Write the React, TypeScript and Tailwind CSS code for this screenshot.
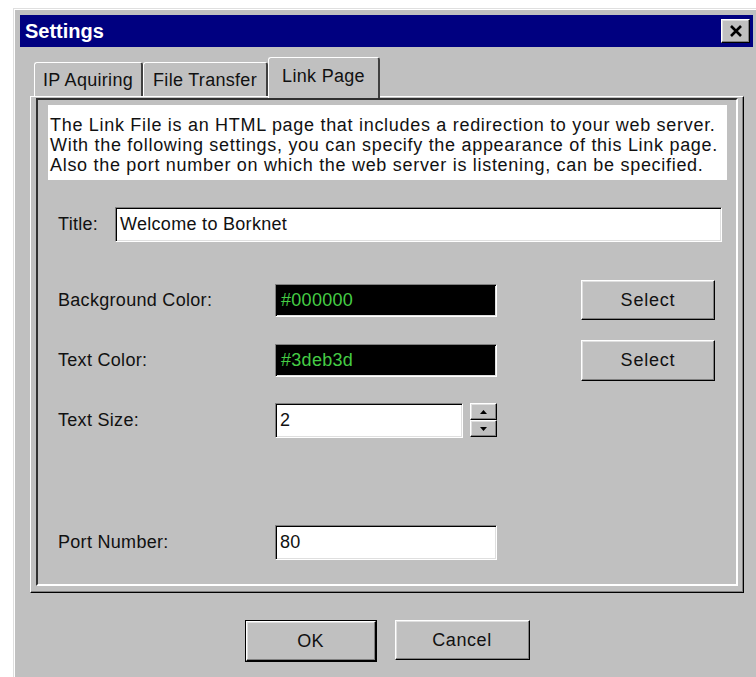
import React from "react";

// classic 3D bevels
const sunken =
  "border border-t-[#808080] border-l-[#808080] border-b-white border-r-white shadow-[inset_1px_1px_0_#000,inset_-1px_-1px_0_#dfdfdf]";
const raised =
  "border border-t-white border-l-white border-b-black border-r-black shadow-[inset_-1px_-1px_0_#808080,inset_1px_1px_0_#dfdfdf]";

function Button({ label, className = "" }: { label: string; className?: string }) {
  return (
    <div className={`bg-[#c0c0c0] ${raised} flex items-center justify-center ${className}`}>
      {label}
    </div>
  );
}

function Tab({ label, active, className = "" }: { label: string; active?: boolean; className?: string }) {
  return (
    <div
      className={`bg-[#c0c0c0] border-l border-t border-l-white border-t-white border-r-2 border-r-[#404040] rounded-t-[3px] flex items-center justify-center ${
        active ? "h-[41px] -mb-[2px] relative z-10 pb-[3px]" : "h-[34px] pt-[2px]"
      } ${className}`}
    >
      {label}
    </div>
  );
}

function ColorBox({ value }: { value: string }) {
  return (
    <div className={`w-[222px] h-[33px] bg-black ${sunken} flex items-center pl-[5px] text-[#45cc45]`}>
      {value}
    </div>
  );
}

export default function App() {
  return (
    <div className="w-[756px] h-[677px] bg-white overflow-hidden pl-[13px] pt-[8px] font-['Liberation_Sans',Arial,sans-serif] text-[18px] tracking-[0.3px] text-[#111]">
      <div className="w-[760px] h-[700px] bg-[#c0c0c0] border-l border-t border-[#dfdfdf] shadow-[inset_1px_1px_0_#fff] pl-[6px] pt-[6px]">
        {/* title bar */}
        <div className="w-[733px] h-[32px] bg-[#000080] flex items-center justify-between pl-[5px] pr-[3px]">
          <span className="text-white font-bold text-[20px] tracking-normal">Settings</span>
          <div className={`w-[29px] h-[24px] bg-[#c0c0c0] ${raised} flex items-center justify-center`}>
            <svg width="14" height="12" viewBox="0 0 14 12">
              <path d="M2 1 L12 11 M12 1 L2 11" stroke="#000" strokeWidth="2.6" />
            </svg>
          </div>
        </div>

        {/* tabs */}
        <div className="mt-[10px] ml-[14px] h-[39px] flex items-end">
          <Tab label="IP Aquiring" className="w-[109px]" />
          <Tab label="File Transfer" className="w-[125px]" />
          <Tab label="Link Page" active className="w-[112px]" />
        </div>

        {/* page */}
        <div className="ml-[10px] w-[714px] h-[497px] border-l border-t border-white border-r border-b border-r-black border-b-black shadow-[inset_-1px_-1px_0_#808080] pl-[5px] pt-[1px] pr-[5px] pb-[6px]">
          <div className="h-full border-2 border-t-[#303030] border-l-[#303030] border-b-white border-r-white flex flex-col">
            <div className="ml-[10px] mt-[5px] w-[679px] h-[75px] bg-white pt-[10px] pl-[2px] leading-[20px] tracking-[0.7px]">
              <div>The Link File is an HTML page that includes a redirection to your web server.</div>
              <div>With the following settings, you can specify the appearance of this Link page.</div>
              <div>Also the port number on which the web server is listening, can be specified.</div>
            </div>

            <div className="mt-[27px] h-[35px] flex items-center">
              <div className="w-[77px] pl-[20px]">Title:</div>
              <div className={`w-[607px] h-[35px] bg-white ${sunken} flex items-center pl-[4px]`}>
                Welcome to Borknet
              </div>
            </div>

            <div className="mt-[38px] h-[40px] flex items-center">
              <div className="w-[237px] pl-[20px]">Background Color:</div>
              <ColorBox value="#000000" />
              <Button label="Select" className="ml-[84px] w-[134px] h-[40px] tracking-[0.8px]" />
            </div>

            <div className="mt-[20px] h-[40px] flex items-center">
              <div className="w-[237px] pl-[20px]">Text Color:</div>
              <ColorBox value="#3deb3d" />
              <Button label="Select" className="ml-[84px] w-[134px] h-[41px] tracking-[0.8px]" />
            </div>

            <div className="mt-[20px] h-[40px] flex items-center">
              <div className="w-[237px] pl-[20px]">Text Size:</div>
              <div className={`w-[188px] h-[35px] bg-white ${sunken} flex items-center pl-[4px]`}>2</div>
              <div className="ml-[7px] flex flex-col">
                <div className={`w-[27px] h-[17px] bg-[#c0c0c0] ${raised} flex items-center justify-center`}>
                  <svg width="7" height="4" viewBox="0 0 7 4">
                    <path d="M3.5 0 L7 4 L0 4 Z" fill="#000" />
                  </svg>
                </div>
                <div className={`w-[27px] h-[17px] bg-[#c0c0c0] ${raised} flex items-center justify-center`}>
                  <svg width="7" height="4" viewBox="0 0 7 4">
                    <path d="M0 0 L7 0 L3.5 4 Z" fill="#000" />
                  </svg>
                </div>
              </div>
            </div>

            <div className="mt-[85px] h-[35px] flex items-center">
              <div className="w-[237px] pl-[20px]">Port Number:</div>
              <div className={`w-[222px] h-[35px] bg-white ${sunken} flex items-center pl-[4px]`}>80</div>
            </div>
          </div>
        </div>

        {/* dialog buttons */}
        <div className="ml-[10px] w-[714px] mt-[27px] flex justify-center items-start gap-[18px]">
          <div className="border border-black">
            <Button label="OK" className="w-[130px] h-[40px]" />
          </div>
          <Button label="Cancel" className="w-[135px] h-[40px] tracking-[0.6px]" />
        </div>
      </div>
    </div>
  );
}
